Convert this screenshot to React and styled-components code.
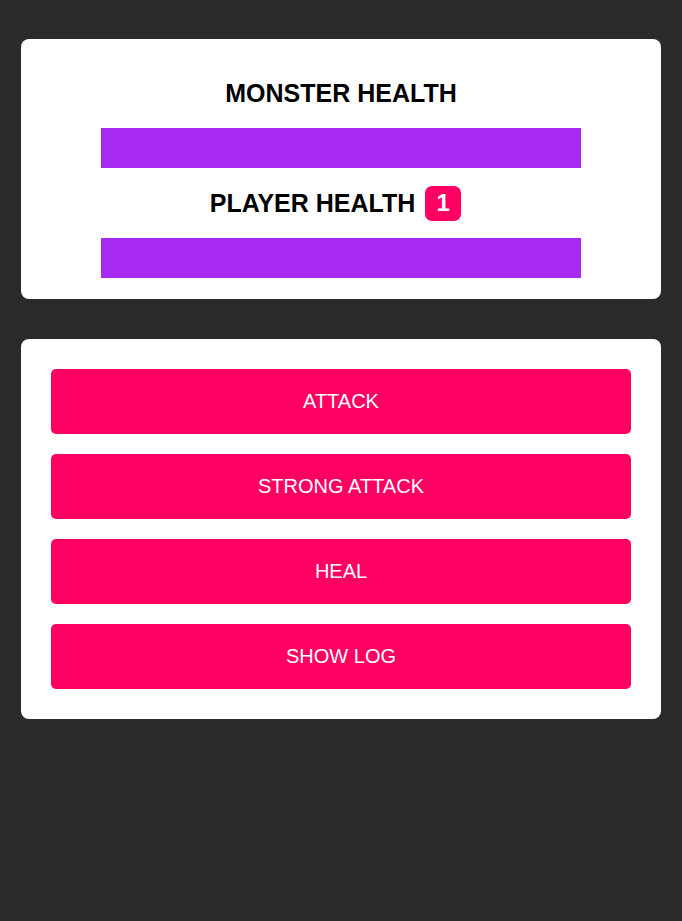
import React from 'react'
import styled, { createGlobalStyle } from "styled-components"

const GlobalStyle = createGlobalStyle`
  html, body {
    margin: 0;
    padding: 0;
    background: #2b2b2b;
    font-family: "Liberation Sans", Arial, sans-serif;
  }
`;

const Page = styled.div`
  display: flex;
  flex-direction: column;
  align-items: center;
  gap: 40px;
  padding-top: 39px;
`;

const Card = styled.section`
  width: 640px;
  box-sizing: border-box;
  background: #fff;
  border-radius: 8px;
  padding: ${p => p.$padding};
  display: flex;
  flex-direction: column;
  align-items: center;
  gap: ${p => p.$gap || '0px'};
`;

const Title = styled.h2`
  margin: 0;
  height: 40px;
  display: flex;
  align-items: center;
  justify-content: center;
  gap: 10px;
  font-size: 25px;
  font-weight: bold;
  color: #000;
`;

const Badge = styled.span`
  display: inline-flex;
  align-items: center;
  justify-content: center;
  width: 36px;
  height: 35px;
  margin-right: 11px;
  border-radius: 7px;
  background: #ff0062;
  color: #fff;
  font-size: 24px;
  font-weight: bold;
`;

const Bar = styled.div`
  width: 480px;
  height: 40px;
  margin: 15px 0;
  background: #a729f2;
`;

const Fill = styled.div`
  height: 100%;
  background: #a729f2;
`;

const Button = styled.button`
  width: 580px;
  height: 65px;
  border: none;
  border-radius: 5px;
  background: #ff0062;
  color: #fff;
  font-family: "Liberation Sans", Arial, sans-serif;
  font-size: 20px;
  cursor: pointer;
`;

export default function App() {
  const monsterHealth = 100;
  const playerHealth = 100;

  return (
    <>
      <GlobalStyle />
      <Page>
        <Card $padding="34px 0 6px">
          <Title>MONSTER HEALTH</Title>
          <Bar><Fill style={{ width: `${monsterHealth}%` }} /></Bar>
          <Title>PLAYER HEALTH <Badge>1</Badge></Title>
          <Bar><Fill style={{ width: `${playerHealth}%` }} /></Bar>
        </Card>
        <Card $padding="30px 0" $gap="20px">
          <Button>ATTACK</Button>
          <Button>STRONG ATTACK</Button>
          <Button>HEAL</Button>
          <Button>SHOW LOG</Button>
        </Card>
      </Page>
    </>
  );
}
